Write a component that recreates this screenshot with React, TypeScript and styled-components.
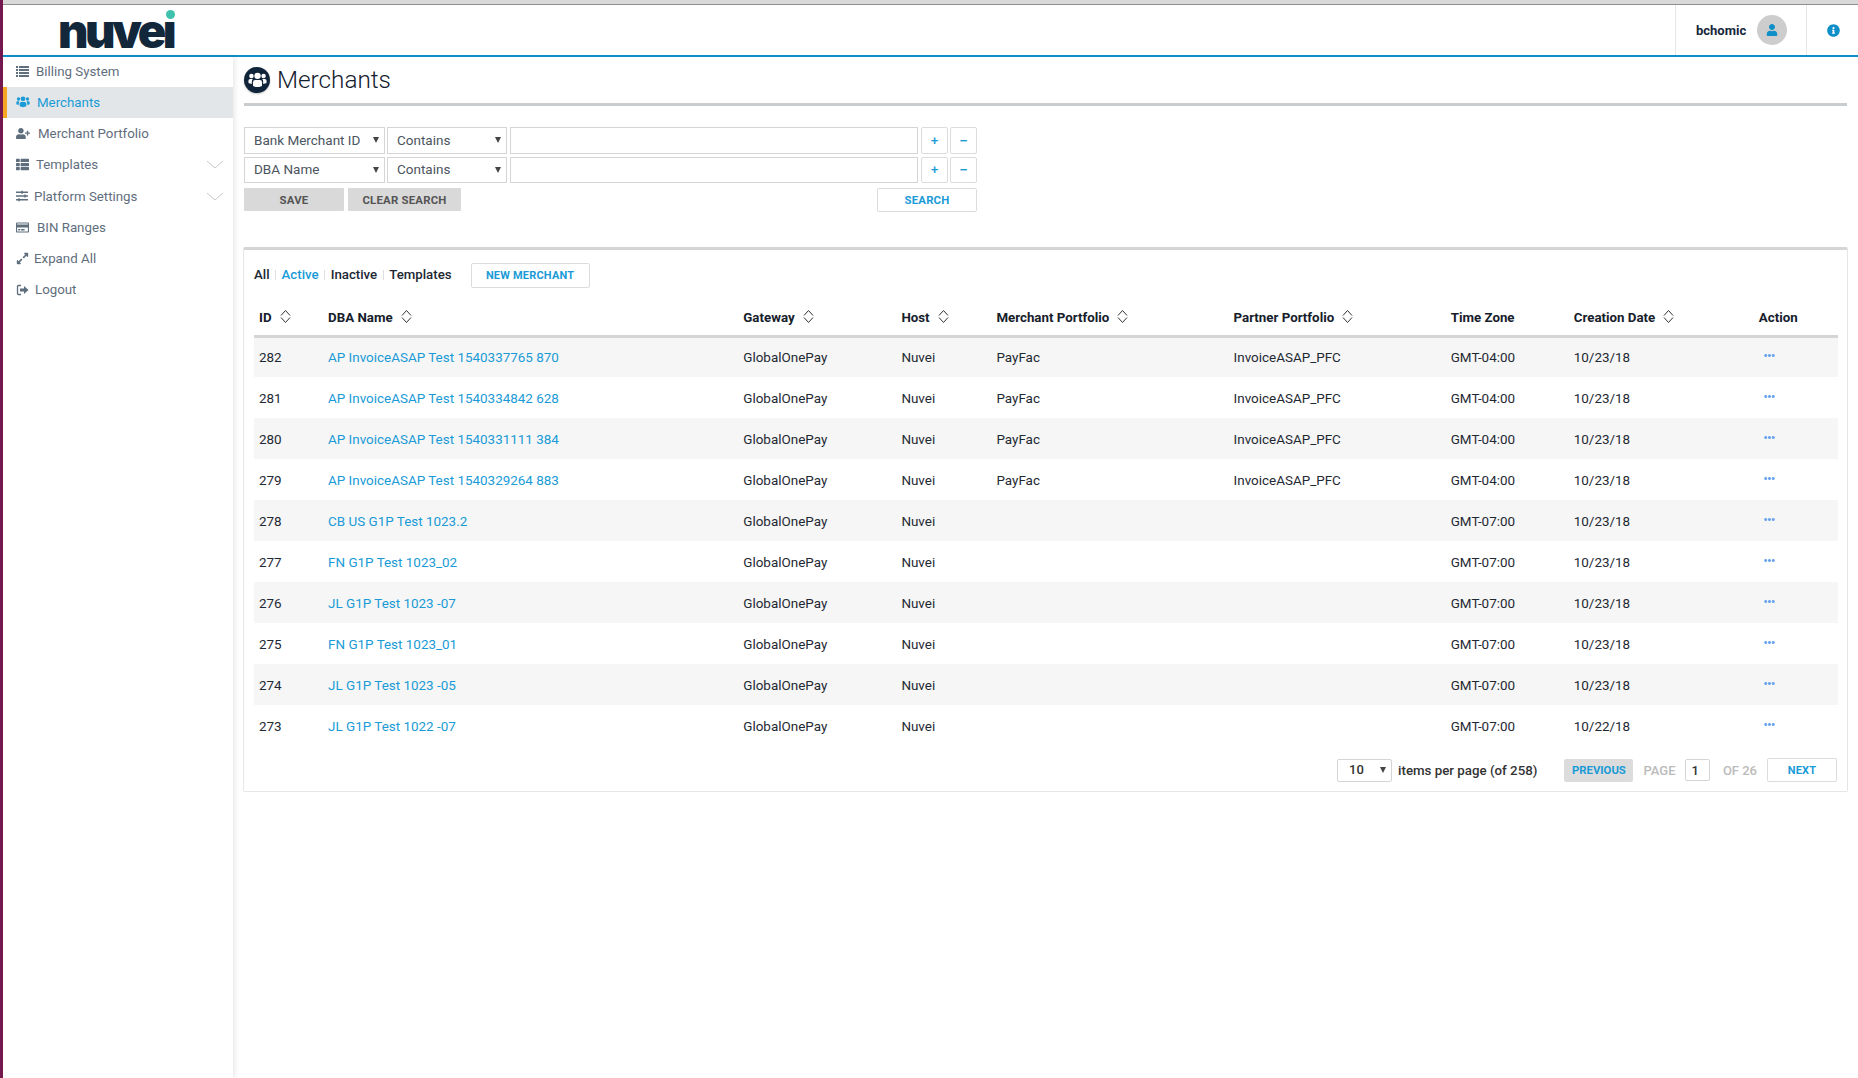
import React from 'react'
import styled, { createGlobalStyle } from 'styled-components'
import {
  FaEllipsisH,
  FaExpandAlt,
  FaInfoCircle,
  FaRegCreditCard,
  FaSlidersH,
  FaThList,
  FaUser,
  FaUserPlus,
} from 'react-icons/fa'

const GlobalStyle = createGlobalStyle`
  html, body {
    margin: 0;
    padding: 0;
    background: #fff;
    font-family: Roboto, "Liberation Sans", sans-serif;
  }
  * { box-sizing: border-box; }
`

const Page = styled.div`
  display: flex;
  flex-direction: column;
  height: 1078px;
  overflow: hidden;
  border-left: 3px solid #74194f;
`
const TopStrip = styled.div`
  height: 5px;
  flex: none;
  background: #d9d9d9;
  border-bottom: 1px solid #8f8f8f;
`
const Header = styled.header`
  display: flex;
  align-items: stretch;
  justify-content: space-between;
  height: 52px;
  flex: none;
  background: #fff;
  border-bottom: 2px solid #0f8fc8;
`
const Logo = styled.div`
  position: relative;
  margin: 2px 0 0 55px;
  width: 122px;
`
const LogoText = styled.span`
  display: block;
  font-family: Inter, sans-serif;
  font-weight: 900;
  font-size: 47px;
  line-height: 48px;
  letter-spacing: -3.4px;
  color: #12283a;
  clip-path: inset(15px -10px 0 -10px);
`
const LogoDot = styled.span`
  position: absolute;
  left: 108px;
  top: 3px;
  width: 9px;
  height: 9px;
  border-radius: 50%;
  background: #3fc1ae;
`
const HeaderRight = styled.div`
  display: flex;
`
const UserBox = styled.div`
  display: flex;
  align-items: center;
  width: 132px;
  padding-left: 20px;
  border-left: 1px solid #e6e6e6;
  border-right: 1px solid #e6e6e6;
`
const UserName = styled.span`
  font-size: 13px;
  font-weight: 700;
  color: #16263a;
`
const Avatar = styled.span`
  display: flex;
  align-items: center;
  justify-content: center;
  width: 30px;
  height: 30px;
  margin-left: 11px;
  border-radius: 50%;
  background: #cdcdcd;
  color: #0f8fc8;
  font-size: 12px;
`
const InfoBox = styled.div`
  display: flex;
  align-items: center;
  justify-content: center;
  width: 51px;
  padding-left: 2px;
  color: #0f8fc8;
  font-size: 13px;
`

const Body = styled.div`
  display: flex;
  flex: 1;
  min-height: 0;
`
const Sidebar = styled.nav`
  width: 230px;
  flex: none;
  background: #fff;
  box-shadow: 2px 0 5px rgba(0, 0, 0, 0.09);
`
const NavItem = styled.a<{ $active?: boolean }>`
  display: flex;
  align-items: center;
  height: 31.3px;
  padding-left: ${(p) => (p.$active ? '9px' : '13px')};
  font-size: 13.3px;
  color: ${(p) => (p.$active ? '#1a9bd7' : '#5f6e7d')};
  background: ${(p) => (p.$active ? '#e2e6e8' : 'transparent')};
  border-left: ${(p) => (p.$active ? '4px solid #f5a623' : 'none')};

  &:first-child {
    height: 29.5px;
  }
`
const NavIcon = styled.span<{ $size: number }>`
  display: flex;
  align-items: center;
  width: 14px;
  flex: none;
  font-size: ${(p) => p.$size}px;
`
const NavLabel = styled.span<{ $indent: number }>`
  flex: 1;
  margin-left: ${(p) => p.$indent}px;
`
const NavChevron = styled.svg`
  width: 18px;
  height: 9px;
  margin-right: 9px;
  fill: none;
  stroke: #c4c9cd;
  stroke-width: 1;
`

const Main = styled.main`
  flex: 1;
  min-width: 0;
  padding: 0 11px 0 11px;
`
const TitleRow = styled.div`
  display: flex;
  align-items: center;
  height: 46px;
  padding-top: 2px;
  border-bottom: 3px solid transparent;
`
const TitleIcon = styled.span`
  display: flex;
  align-items: center;
  justify-content: center;
  width: 26px;
  height: 26px;
  border-radius: 50%;
  background: #10253a;
  color: #fff;
  font-size: 19px;
  box-shadow: 0 1px 2px rgba(0, 0, 0, 0.25);
`
const Title = styled.h1`
  margin: 0 0 0 7px;
  font-size: 24.3px;
  font-weight: 300;
  color: #12202e;
`
const Rule = styled.div`
  height: 3px;
  background: #c9cdd0;
`
const Filters = styled.form`
  display: flex;
  flex-direction: column;
  gap: 3px;
  width: 733px;
  margin-top: 21px;
`
const FilterRow = styled.div`
  display: flex;
  height: 26.5px;
`
const SelectWrap = styled.span<{ $w: number; $ml?: number }>`
  position: relative;
  display: block;
  width: ${(p) => p.$w}px;
  margin-left: ${(p) => p.$ml || 0}px;
  flex: none;

  &::after {
    content: '';
    position: absolute;
    right: 6px;
    top: 50%;
    margin-top: -3px;
    border-left: 3px solid transparent;
    border-right: 3px solid transparent;
    border-top: 6px solid #444;
  }
`
const Select = styled.select`
  width: 100%;
  height: 100%;
  padding: 0 0 1px 9px;
  appearance: none;
  background: #fff;
  border: 1px solid #d5d5d5;
  border-radius: 0;
  font-family: inherit;
  font-size: 13.5px;
  color: #4c5560;
`
const TextInput = styled.input`
  width: 408px;
  flex: none;
  margin-left: 3px;
  border: 1px solid #d5d5d5;
  background: #fff;
`
const SquareButton = styled.button<{ $ml: number }>`
  width: 27px;
  padding: 0;
  flex: none;
  margin-left: ${(p) => p.$ml}px;
  background: #fff;
  border: 1px solid #dcdcdc;
  border-radius: 2px;
  font-family: "Liberation Sans", sans-serif;
  font-size: 13px;
  font-weight: 700;
  color: #1a9bd7;
`
const ActionRow = styled.div`
  display: flex;
  justify-content: space-between;
  margin-top: 2px;
`
const ActionGroup = styled.div`
  display: flex;
  gap: 4px;
`
const GrayButton = styled.button<{ $w: number }>`
  width: ${(p) => p.$w}px;
  height: 23px;
  padding: 0;
  background: #d9d9d9;
  border: none;
  border-radius: 1px;
  font-family: inherit;
  font-size: 11.4px;
  font-weight: 700;
  letter-spacing: 0.2px;
  color: #555;
`
const OutlineButton = styled.button<{ $w: number; $h: number }>`
  width: ${(p) => p.$w}px;
  height: ${(p) => p.$h}px;
  padding: 0;
  flex: none;
  background: #fff;
  border: 1px solid #dcdcdc;
  border-radius: 2px;
  font-family: inherit;
  font-size: 11.4px;
  font-weight: 700;
  letter-spacing: 0.2px;
  color: #1a9bd7;
`
const Card = styled.section`
  height: 545px;
  margin: 35px -1px 0;
  padding: 13px 9px 0 10px;
  background: #fff;
  border: 1px solid #e6e6e6;
  border-top: 3px solid #d5d5d5;
  border-radius: 2px;
`
const Tabs = styled.div`
  display: flex;
  align-items: center;
  height: 25px;
`
const Tab = styled.a<{ $active?: boolean }>`
  margin-bottom: 2px;
  font-size: 13.25px;
  font-weight: 500;
  color: ${(p) => (p.$active ? '#1a9bd7' : '#1c2733')};
`
const TabSep = styled.span`
  width: 1px;
  height: 10px;
  margin: 0 5.5px 2px;
  background: #dfdfdf;
`
const NewMerchant = styled(OutlineButton)`
  margin-left: 19px;
  font-size: 11px;
`
const Table = styled.table`
  width: 100%;
  margin-top: 0;
  border-collapse: collapse;
  table-layout: fixed;
`
const HeadRow = styled.tr`
  height: 48px;
  border-bottom: 3px solid #d5d5d5;
`
const Th = styled.th<{ $w: number }>`
  width: ${(p) => p.$w}px;
  padding: 12px 0 0 5px;
  text-align: left;
  font-size: 13.3px;
  font-weight: 700;
  color: #16202b;
`
const SortIcon = styled.svg`
  width: 11px;
  height: 13px;
  margin-left: 8px;
  vertical-align: -1px;
  fill: none;
  stroke: #333;
  stroke-width: 1;
`
const Row = styled.tr`
  height: 41px;

  &:nth-child(odd) {
    background: #f6f6f6;
  }
`
const Td = styled.td`
  padding: 1px 0 0 5px;
  font-size: 13.45px;
  color: #1f2933;
  white-space: nowrap;
`
const MerchantLink = styled.a`
  color: #1a9bd7;
`
const Dots = styled.span`
  display: inline-flex;
  position: relative;
  top: -1px;
  margin-left: 5px;
  color: #6aa5ee;
  font-size: 11px;
`
const Pager = styled.div`
  display: flex;
  align-items: center;
  justify-content: flex-end;
  height: 24px;
  margin-top: 12px;
  padding-right: 1px;
`
const PagerSelect = styled(SelectWrap)`
  height: 23px;

  select {
    padding-left: 11px;
    border-radius: 2px;
    font-size: 13px;
    font-weight: 500;
    color: #333;
  }
`
const PerPage = styled.span`
  margin: 0 27px 0 6px;
  font-size: 13.3px;
  font-weight: 500;
  color: #333;
`
const PreviousButton = styled.button`
  width: 69px;
  height: 23px;
  padding: 0;
  background: #dcdcdc;
  border: none;
  border-radius: 2px;
  font-family: inherit;
  font-size: 11.3px;
  font-weight: 700;
  color: #1a9bd7;
`
const PagerText = styled.span`
  margin: 0 10px;
  font-size: 13px;
  font-weight: 500;
  color: #bbb;
`
const PageCount = styled(PagerText)`
  margin-left: 12.4px;
`
const PageInput = styled.input`
  width: 25px;
  height: 22px;
  padding: 0 0 0 5px;
  background: #fff;
  border: 1px solid #d5d5d5;
  border-radius: 2px;
  font-family: inherit;
  font-size: 13px;
  font-weight: 500;
  color: #333;
`
const NextButton = styled(OutlineButton)`
  margin-left: 0;
  font-size: 11px;
`

const columns = [
  { label: 'ID', width: 69, sort: true },
  { label: 'DBA Name', width: 415, sort: true },
  { label: 'Gateway', width: 158, sort: true },
  { label: 'Host', width: 95, sort: true },
  { label: 'Merchant Portfolio', width: 237, sort: true },
  { label: 'Partner Portfolio', width: 217, sort: true },
  { label: 'Time Zone', width: 123, sort: false },
  { label: 'Creation Date', width: 185, sort: true },
  { label: 'Action', width: 84, sort: false },
]

const merchants = [
  { id: 282, name: 'AP InvoiceASAP Test 1540337765 870', mp: 'PayFac', pp: 'InvoiceASAP_PFC', tz: 'GMT-04:00', date: '10/23/18' },
  { id: 281, name: 'AP InvoiceASAP Test 1540334842 628', mp: 'PayFac', pp: 'InvoiceASAP_PFC', tz: 'GMT-04:00', date: '10/23/18' },
  { id: 280, name: 'AP InvoiceASAP Test 1540331111 384', mp: 'PayFac', pp: 'InvoiceASAP_PFC', tz: 'GMT-04:00', date: '10/23/18' },
  { id: 279, name: 'AP InvoiceASAP Test 1540329264 883', mp: 'PayFac', pp: 'InvoiceASAP_PFC', tz: 'GMT-04:00', date: '10/23/18' },
  { id: 278, name: 'CB US G1P Test 1023.2', mp: '', pp: '', tz: 'GMT-07:00', date: '10/23/18' },
  { id: 277, name: 'FN G1P Test 1023_02', mp: '', pp: '', tz: 'GMT-07:00', date: '10/23/18' },
  { id: 276, name: 'JL G1P Test 1023 -07', mp: '', pp: '', tz: 'GMT-07:00', date: '10/23/18' },
  { id: 275, name: 'FN G1P Test 1023_01', mp: '', pp: '', tz: 'GMT-07:00', date: '10/23/18' },
  { id: 274, name: 'JL G1P Test 1023 -05', mp: '', pp: '', tz: 'GMT-07:00', date: '10/23/18' },
  { id: 273, name: 'JL G1P Test 1022 -07', mp: '', pp: '', tz: 'GMT-07:00', date: '10/22/18' },
]

// fa4-style group, the fa5 one in react-icons is too flat
const UsersIcon = () => (
  <svg width="1em" height="0.82em" viewBox="0 0 16 13" fill="currentColor">
    <circle cx="8" cy="3.2" r="2.7" />
    <circle cx="2.9" cy="3.4" r="1.9" />
    <circle cx="13.1" cy="3.4" r="1.9" />
    <path d="M4.2 11.8V8.6Q4.2 6.7 6 6.7H10Q11.8 6.7 11.8 8.6V11.8Q8 13.6 4.2 11.8Z" />
    <path d="M.4 9.3V7.2Q.4 5.9 1.8 5.9H4Q3.2 6.9 3.2 8.4V10Q1.5 10 .4 9.3Z" />
    <path d="M15.6 9.3V7.2Q15.6 5.9 14.2 5.9H12Q12.8 6.9 12.8 8.4V10Q14.5 10 15.6 9.3Z" />
  </svg>
)

const BillingIcon = () => (
  <svg width="13" height="11" viewBox="0 0 13 11" fill="currentColor">
    <path d="M0 0h2v2H0zM3 0h10v2H3zM0 3h2v2H0zM3 3h10v2H3zM0 6h2v2H0zM3 6h10v2H3zM0 9h2v2H0zM3 9h10v2H3z" />
  </svg>
)

const LogoutIcon = () => (
  <svg width="13" height="12" viewBox="0 0 13 12">
    <path d="M5 1.5H2.5a1 1 0 0 0-1 1v7a1 1 0 0 0 1 1H5" fill="none" stroke="currentColor" strokeWidth="1.3" />
    <path d="M4 4.5h4V2l4.5 4L8 10V7.5H4z" fill="currentColor" />
  </svg>
)

const Chevron = () => (
  <NavChevron viewBox="0 0 18 9">
    <path d="M1 1l8 7 8-7" />
  </NavChevron>
)

const Sort = () => (
  <SortIcon viewBox="0 0 11 13">
    <path d="M1 5.5l4.5-5 4.5 5M1 7.5l4.5 5 4.5-5" />
  </SortIcon>
)

const navItems = [
  { label: 'Billing System', icon: <BillingIcon />, size: 13, indent: 6 },
  { label: 'Merchants', icon: <UsersIcon />, size: 14, indent: 7, active: true },
  { label: 'Merchant Portfolio', icon: <FaUserPlus />, size: 15, indent: 8 },
  { label: 'Templates', icon: <FaThList />, size: 13, indent: 6, chevron: true },
  { label: 'Platform Settings', icon: <FaSlidersH />, size: 12, indent: 4, chevron: true },
  { label: 'BIN Ranges', icon: <FaRegCreditCard />, size: 13, indent: 7 },
  { label: 'Expand All', icon: <FaExpandAlt />, size: 13, indent: 4 },
  { label: 'Logout', icon: <LogoutIcon />, size: 13, indent: 5 },
]

const FilterLine: React.FC<{ field: string }> = ({ field }) => (
  <FilterRow>
    <SelectWrap $w={141}>
      <Select defaultValue={field}>
        <option>{field}</option>
      </Select>
    </SelectWrap>
    <SelectWrap $w={120} $ml={2}>
      <Select defaultValue="Contains">
        <option>Contains</option>
      </Select>
    </SelectWrap>
    <TextInput />
    <SquareButton type="button" $ml={3}>+</SquareButton>
    <SquareButton type="button" $ml={2}>−</SquareButton>
  </FilterRow>
)

const App: React.FC = () => {
  return (
    <Page>
      <GlobalStyle />
      <TopStrip />
      <Header>
        <Logo>
          <LogoText>nuvei</LogoText>
          <LogoDot />
        </Logo>
        <HeaderRight>
          <UserBox>
            <UserName>bchomic</UserName>
            <Avatar><FaUser /></Avatar>
          </UserBox>
          <InfoBox><FaInfoCircle /></InfoBox>
        </HeaderRight>
      </Header>
      <Body>
        <Sidebar>
          {navItems.map((item) => (
            <NavItem key={item.label} $active={item.active}>
              <NavIcon $size={item.size}>{item.icon}</NavIcon>
              <NavLabel $indent={item.indent}>{item.label}</NavLabel>
              {item.chevron && <Chevron />}
            </NavItem>
          ))}
        </Sidebar>
        <Main>
          <TitleRow>
            <TitleIcon><UsersIcon /></TitleIcon>
            <Title>Merchants</Title>
          </TitleRow>
          <Rule />
          <Filters>
            <FilterLine field="Bank Merchant ID" />
            <FilterLine field="DBA Name" />
            <ActionRow>
              <ActionGroup>
                <GrayButton type="button" $w={100}>SAVE</GrayButton>
                <GrayButton type="button" $w={113}>CLEAR SEARCH</GrayButton>
              </ActionGroup>
              <OutlineButton type="button" $w={100} $h={24}>SEARCH</OutlineButton>
            </ActionRow>
          </Filters>
          <Card>
            <Tabs>
              <Tab>All</Tab>
              <TabSep />
              <Tab $active>Active</Tab>
              <TabSep />
              <Tab>Inactive</Tab>
              <TabSep />
              <Tab>Templates</Tab>
              <NewMerchant type="button" $w={119} $h={25}>NEW MERCHANT</NewMerchant>
            </Tabs>
            <Table>
              <thead>
                <HeadRow>
                  {columns.map((col) => (
                    <Th key={col.label} $w={col.width}>
                      {col.label}
                      {col.sort && <Sort />}
                    </Th>
                  ))}
                </HeadRow>
              </thead>
              <tbody>
                {merchants.map((m) => (
                  <Row key={m.id}>
                    <Td>{m.id}</Td>
                    <Td><MerchantLink>{m.name}</MerchantLink></Td>
                    <Td>GlobalOnePay</Td>
                    <Td>Nuvei</Td>
                    <Td>{m.mp}</Td>
                    <Td>{m.pp}</Td>
                    <Td>{m.tz}</Td>
                    <Td>{m.date}</Td>
                    <Td><Dots><FaEllipsisH /></Dots></Td>
                  </Row>
                ))}
              </tbody>
            </Table>
            <Pager>
              <PagerSelect $w={55}>
                <Select defaultValue="10">
                  <option>10</option>
                </Select>
              </PagerSelect>
              <PerPage>items per page (of 258)</PerPage>
              <PreviousButton type="button">PREVIOUS</PreviousButton>
              <PagerText>PAGE</PagerText>
              <PageInput readOnly value="1" />
              <PageCount>OF 26</PageCount>
              <NextButton type="button" $w={70} $h={24}>NEXT</NextButton>
            </Pager>
          </Card>
        </Main>
      </Body>
    </Page>
  )
}

export default App
